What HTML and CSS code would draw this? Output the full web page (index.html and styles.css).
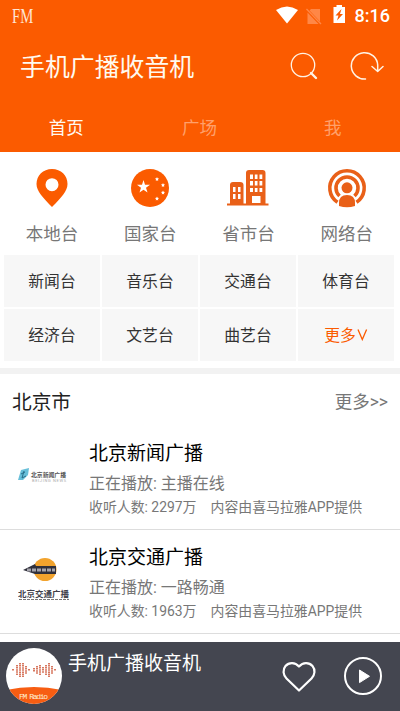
FILE: index.html
```html
<!DOCTYPE html>
<html lang="zh-CN">
<head>
<meta charset="utf-8">
<title>手机广播收音机</title>
<link rel="stylesheet" href="styles.css">
</head>
<body>
<div class="app">
  <header class="header">
    <div class="status">
      <span class="fm">FM</span>
      <svg class="wifi" width="24" height="18" viewBox="0 0 24 18"><path d="M1 4Q12-3 23 4L12 17.500Z" fill="#fff"/></svg>
      <svg class="sim" width="16" height="17" viewBox="0 0 16 17"><path d="M5 1H14V13.500L3.500 2.500ZM1.500 4.500L12.500 16H1.500Z" fill="#ff8746"/><path d="M.5 1L15 16" stroke="#ff8746" stroke-width="1.300"/></svg>
      <svg class="battery" width="13" height="18" viewBox="0 0 13 18"><path d="M3.500 0H9V2H12V18H.5V2H3.500Z" fill="#fff"/><path d="M8.500 4L2.500 10.500H5.500L4 15.500L10 9H7Z" fill="#fb5b00"/></svg>
      <span class="clock">8:16</span>
    </div>
    <div class="titlebar">
      <h1>手机广播收音机</h1>
      <svg class="search" width="28" height="28" viewBox="0 0 28 28" fill="none" stroke="#fff3e4"><circle cx="13" cy="13" r="11.700" stroke-width="1.300"/><path d="M21 21L26 26" stroke-width="2.400" stroke-linecap="round"/></svg>
      <svg class="refresh" width="34" height="30" viewBox="0 0 34 30" fill="none" stroke="#fff3e4" stroke-width="1.500" stroke-linecap="round" stroke-linejoin="round"><path d="M15.500 28A13.200 13.200 0 1 1 27.700 14V19.500M22 15.500L27.700 20.500L33 15.500"/></svg>
    </div>
    <nav class="tabs"><span class="tab active">首页</span><span class="tab">广场</span><span class="tab">我</span></nav>
  </header>

  <section class="categories">
    <div class="category"><svg width="42" height="42" viewBox="0 0 42 42"><path fill="#fb5b00" fill-rule="evenodd" d="M21 2C12 2 5.500 8.600 5.500 17C5.500 24 12 31 21 40C30 31 36.500 24 36.500 17C36.500 8.600 30 2 21 2ZM21 11.200A6.500 6.500 0 1 1 21 24.200A6.500 6.500 0 1 1 21 11.200Z"/></svg><span>本地台</span></div>
    <div class="category"><svg width="42" height="42" viewBox="0 0 42 42"><circle cx="21" cy="21" r="19" fill="#fb5b00"/><g fill="#fff"><path d="M14.500 13L16 17.800H21L17 20.800L18.500 25.600L14.500 22.700L10.500 25.600L12 20.800L8 17.800H13Z"/><path d="M28 10l.6 1.300 1.400.2-1 1 .2 1.400-1.200-.7-1.200.7.200-1.400-1-1 1.400-.2ZM34 16l.6 1.300 1.400.2-1 1 .2 1.400-1.200-.7-1.200.7.200-1.400-1-1 1.400-.2ZM34 23.500l.6 1.300 1.400.2-1 1 .2 1.400-1.200-.7-1.200.7.200-1.400-1-1 1.400-.2ZM28 29.500l.6 1.300 1.400.2-1 1 .2 1.400-1.200-.7-1.200.7.200-1.400-1-1 1.400-.2Z"/></g></svg><span>国家台</span></div>
    <div class="category"><svg width="42" height="42" viewBox="0 0 42 42"><path fill="#e96018" fill-rule="evenodd" d="M0 36.500H3V18Q3 15 6 15H13Q16.500 15 16.500 18V36.500H19V6Q19 3 22 3H35.500Q38.500 3 38.500 6V36.500H41.500V38.500H0ZM6 20H8.500V25H6ZM11 20H13.500V25H11ZM6 27H8.500V32H6ZM11 27H13.500V32H11ZM23 7.500H26V12H23ZM27.800 7.500H30.500V12H27.800ZM32.500 7.500H35.300V12H32.500ZM23 14H26V18.500H23ZM27.800 14H30.500V18.500H27.800ZM32.500 14H35.300V18.500H32.500ZM23 21H26V25H23ZM27.800 21H30.500V25H27.800ZM32.500 21H35.300V25H32.500ZM25 29H33.500V36H25Z"/></svg><span>省市台</span></div>
    <div class="category"><svg width="42" height="42" viewBox="0 0 42 42" fill="none" stroke="#e96018" stroke-width="3.600"><path d="M11.500 35.300A17.200 17.200 0 1 1 30.500 35.300M13.500 29A11 11 0 1 1 28.500 29"/><path d="M13 39V36Q13 28 21 28Q29 28 29 36V39Q21 41.500 13 39Z" fill="#e96018" stroke="none"/><circle cx="21" cy="20.800" r="5.500" fill="#e96018" stroke="none"/></svg><span>网络台</span></div>
  </section>
  <section class="chips">
    <span>新闻台</span><span>音乐台</span><span>交通台</span><span>体育台</span>
    <span>经济台</span><span>文艺台</span><span>曲艺台</span><span class="more-chip">更多<svg width="12" height="13" viewBox="0 0 12 13" fill="none" stroke="#fb5b00" stroke-width="1.300"><path d="M2 1.500L6.300 11.500L10.600 1.500"/></svg></span>
  </section>

  <section class="stations">
    <div class="section-head"><h2>北京市</h2><span>更多&gt;&gt;</span></div>
    <article class="station">
      <svg class="logo" width="52" height="52" viewBox="0 0 52 52"><path d="M3 16L11 14L10 21L5 26L0 26Z" fill="#68bfd9"/><path d="M3 20L7 18M6 17L4 24L8 22" stroke="#286d89" fill="none"/><text x="13" y="22.500" class="news-name" textLength="35" lengthAdjust="spacingAndGlyphs">北京新闻广播</text><text x="14" y="28" class="news-sub" textLength="34">BEIJING NEWS</text></svg>
      <div class="info"><h3>北京新闻广播</h3><p class="playing">正在播放: 主播在线</p><p class="meta"><span>收听人数: 2297万</span><span>内容由喜马拉雅APP提供</span></p></div>
    </article>
    <article class="station">
      <svg class="logo" width="52" height="52" viewBox="0 0 52 52"><circle cx="27" cy="11.500" r="11.500" fill="#f2a32d"/><path d="M5 12L17 6L18 8H38V16H17Z" fill="#30303b"/><path d="M9 12H37" stroke="#a5a4ac" stroke-width="3" stroke-dasharray="4 1"/><text x="0" y="38.500" class="traffic-name" textLength="51" lengthAdjust="spacingAndGlyphs">北京交通广播</text><path d="M1 41.500H51" stroke="#777" stroke-dasharray="3 1"/></svg>
      <div class="info"><h3>北京交通广播</h3><p class="playing">正在播放: 一路畅通</p><p class="meta"><span>收听人数: 1963万</span><span>内容由喜马拉雅APP提供</span></p></div>
    </article>
  </section>

  <footer class="player">
    <svg class="cover" width="56" height="56" viewBox="0 0 56 56"><defs><clipPath id="disc"><circle cx="28" cy="28" r="28"/></clipPath></defs><g clip-path="url(#disc)"><path fill="#fff" d="M0 0H56V56H0Z"/><path fill="#f75d12" d="M0 42Q28 36 56 42V56H0Z"/><g stroke="#d87961" stroke-width="2" stroke-dasharray="1.500 .6"><path d="M7 21V23M11 17V27M14 15V29M17 15V29M20 18V26M23 21V23M28 20V24M31 18V26M34 17V27M37 19V25M40 17V27M43 15V29M46 18V26M49 21V23"/></g><text x="13" y="50.500" class="cover-text" textLength="29">FM Radio</text></g></svg>
    <span class="player-title">手机广播收音机</span>
    <svg class="heart" width="34" height="32" viewBox="0 0 34 32" fill="none" stroke="#fff" stroke-width="2.200" stroke-linejoin="round"><path d="M17 29.500L4.500 17.500C1 14 .5 8.500 3.500 5C7 1 13 1 17 5.500C21 1 27 1 30.500 5C33.500 8.500 33 14 29.500 17.500Z"/></svg>
    <svg class="play" width="40" height="40" viewBox="0 0 40 40"><circle cx="20" cy="20" r="18" fill="none" stroke="#fff" stroke-width="2"/><path d="M16.500 14L26.500 20.300L16.500 26.600Z" fill="#fff" stroke="#fff" stroke-linejoin="round"/></svg>
  </footer>
</div>
</body>
</html>
```
FILE: styles.css
```css
* { box-sizing: border-box; }
body { margin: 0; background: #fff; font-family: Roboto, "Noto Sans CJK SC", sans-serif; }
h1, h2, h3, p { margin: 0; font-weight: 400; }
svg { display: block; flex: none; }
.app { width: 400px; height: 711px; overflow: hidden; display: flex; flex-direction: column; }
.header { height: 152px; flex: none; background: #fb5b00; color: #fff; display: flex; flex-direction: column; }
.status { height: 32px; display: flex; align-items: center; padding: 0 10px 0 12px; }
.fm { font: 21px/32px "Liberation Serif", serif; color: #ffe6d5; margin-right: auto; transform: scaleX(.7); transform-origin: left; }
.wifi { margin: -2px 7px 0 0; }
.sim { margin-right: 11px; }
.battery { margin: -4px 9px 0 0; }
.clock { font-size: 18px; font-weight: 500; line-height: 32px; }
.titlebar { height: 72px; display: flex; align-items: center; padding: 0 16px 4px 20px; }
.titlebar h1 { font-size: 24.900px; line-height: 36px; margin: 3px auto 0 0; color: #fff9ef; }
.search { margin-right: 32px; }
.tabs { height: 48px; display: grid; grid-template-columns: repeat(3, 1fr); }
.tab { text-align: center; font-size: 17.500px; line-height: 48px; padding-right: 1px; color: #ffa06a; border-bottom: 2px solid transparent; }
.tab.active { color: #fffaf0; border-color: #fff; }
.categories { height: 103px; flex: none; padding: 15px 4px 0; display: grid; grid-template-columns: repeat(4, 98.200px); }
.category { display: flex; flex-direction: column; align-items: center; padding-right: 2px; font-size: 17.500px; line-height: 26px; color: #777; }
.category span { margin-top: 12px; }
.chips { height: 113px; flex: none; padding: 0 6px 7px 4px; display: grid; grid-template-columns: repeat(4, 1fr); grid-template-rows: 52px 52px; gap: 2px; }
.chips > span { background: #f7f7f7; color: #333; font-size: 15.800px; display: flex; align-items: center; justify-content: center; padding-bottom: 1px; }
.chips .more-chip { color: #fb5b00; }
.stations { border-top: 6px solid #f2f2f2; flex: 1; min-height: 0; }
.section-head { height: 52px; padding: 0 12px; display: flex; justify-content: space-between; align-items: center; color: #222; }
.section-head h2 { font-size: 19.700px; }
.section-head span { font-size: 17.500px; color: #777; }
.station { height: 104px; border-bottom: 1px solid #ddd; display: flex; padding: 13px 0 0 18px; }
.logo { margin-top: 15px; }
.news-name { font-size: 6px; font-weight: 700; fill: #555; }
.news-sub { font-size: 4px; fill: #aaa; }
.traffic-name { font-size: 8px; font-weight: 700; fill: #40404a; }
.info { margin-left: 19px; white-space: nowrap; }
.info h3 { font-size: 19px; line-height: 30px; color: #000; }
.playing { font-size: 16px; line-height: 24px; margin-top: 3px; color: #777; }
.meta { display: flex; gap: 14px; font-size: 13.900px; line-height: 22px; color: #777; }
.player { height: 69px; flex: none; background: #444650; display: flex; color: #fff; padding: 6px 17px 0 6px; }
.player-title { font-size: 19px; line-height: 30px; margin: 1px auto 0 6px; }
.cover-text { font: 8px "Liberation Mono", monospace; fill: #fff0d5; }
.heart { margin: 13px 27px 0 0; }
.play { margin-top: 8px; }
```
